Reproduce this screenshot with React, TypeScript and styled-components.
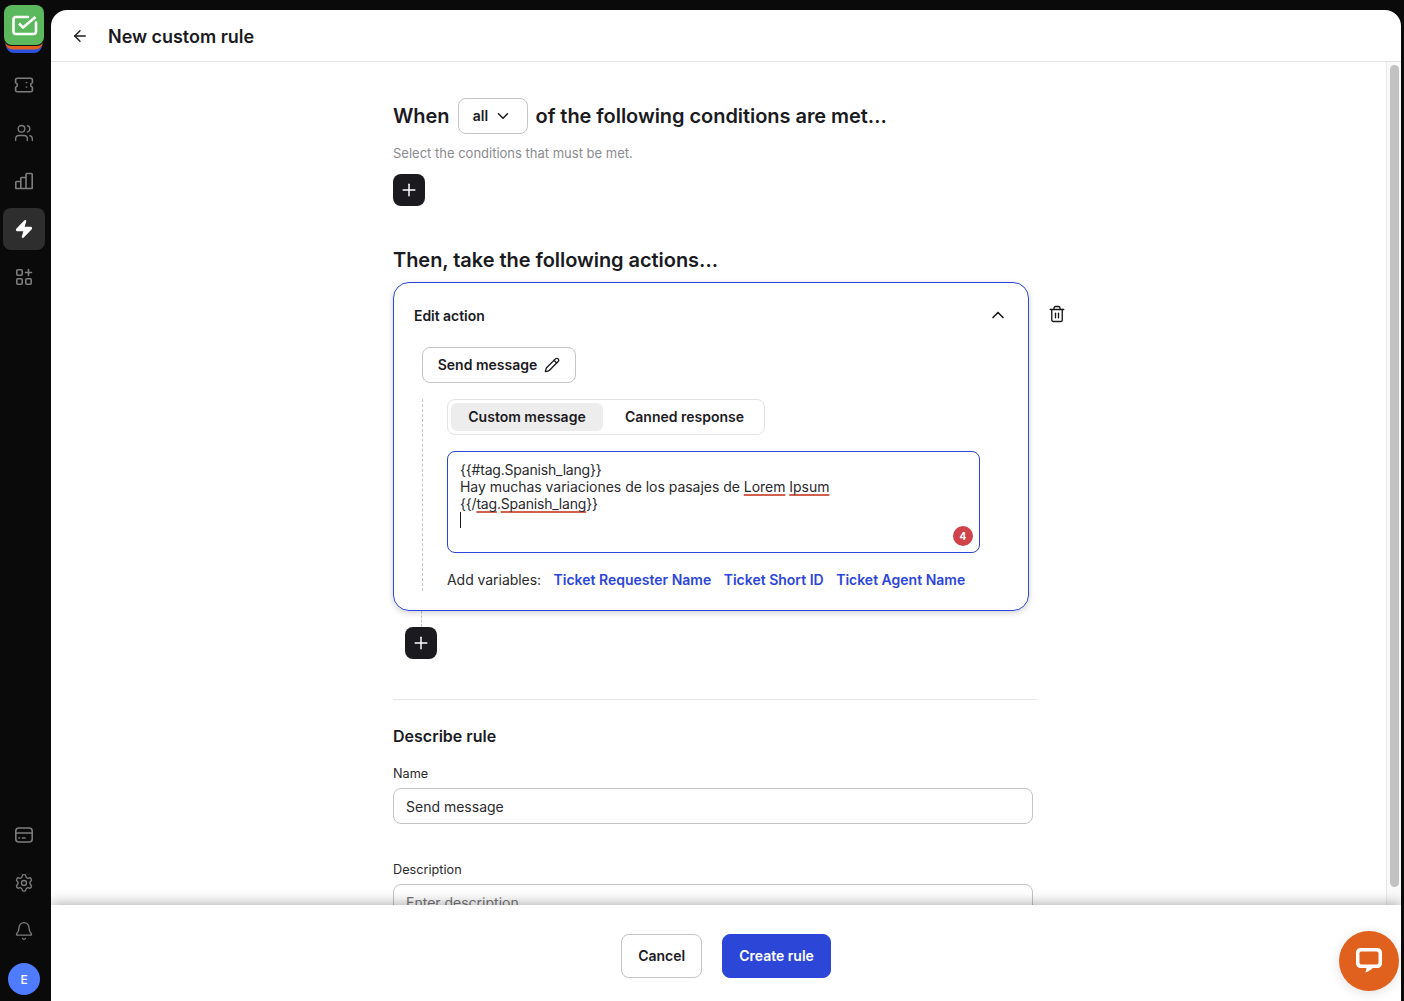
import { ReactNode } from 'react'
import styled, { createGlobalStyle } from 'styled-components'
import {
  ArrowLeft,
  Bell,
  ChevronDown,
  ChevronUp,
  Pencil,
  Plus,
  Settings,
  Trash2,
  Users,
  Zap
} from 'lucide-react'

const GlobalStyle = createGlobalStyle`
  html, body {
    margin: 0;
    height: 100%;
    overflow: hidden;
    background: #0a0a0a;
  }
  body, input, button {
    font-family: Inter, "Liberation Sans", sans-serif;
  }
  * {
    box-sizing: border-box;
  }
`

function TicketIcon() {
  return (
    <svg width="20" height="20" viewBox="0 0 20 20" fill="none" stroke="currentColor" strokeWidth="1.6" strokeLinejoin="round">
      <path d="M3.2 3.2h13.6a1.6 1.6 0 0 1 1.6 1.6v2.900a2.400 2.400 0 0 0 0 4.600v2.900a1.600 1.600 0 0 1-1.600 1.600H3.200a1.600 1.600 0 0 1-1.600-1.600v-2.900a2.400 2.400 0 0 0 0-4.600V4.800a1.600 1.600 0 0 1 1.600-1.600z" />
      <path d="M12.500 7v1.200M12.500 11.500v1.200" />
    </svg>
  )
}

function BarsIcon() {
  return (
    <svg width="20" height="20" viewBox="0 0 20 20" fill="none" stroke="currentColor" strokeWidth="1.6" strokeLinejoin="round">
      <path d="M1.800 17.500v-6.200a.8.8 0 0 1 .8-.8h4.200v7zM6.800 17.500V7.300a.8.8 0 0 1 .8-.8h4.400v11zM12 17.500V3.300a.8.8 0 0 1 .8-.8h4.600a.8.8 0 0 1 .8.8v14.200z" />
    </svg>
  )
}

function AppsIcon() {
  return (
    <svg width="20" height="20" viewBox="0 0 20 20" fill="none" stroke="currentColor" strokeWidth="1.6" strokeLinecap="round">
      <rect x="2.800" y="2.800" width="5.400" height="5.400" rx="1" />
      <rect x="2.800" y="11.800" width="5.400" height="5.400" rx="1" />
      <rect x="11.800" y="11.800" width="5.400" height="5.400" rx="1" />
      <path d="M14.500 2.500v6M11.500 5.500h6" />
    </svg>
  )
}

function CardIcon() {
  return (
    <svg width="20" height="20" viewBox="0 0 20 20" fill="none" stroke="currentColor" strokeWidth="1.6" strokeLinecap="round">
      <rect x="1.800" y="3" width="16.400" height="14" rx="3" />
      <path d="M1.800 8h16.400M5 13h.6M8.500 13h2.500" />
    </svg>
  )
}

function Logo() {
  return (
    <svg width="40" height="48" viewBox="0 0 40 48" aria-hidden>
      <path d="M2 36h36v4a8 8 0 0 1-8 8H10a8 8 0 0 1-8-8z" fill="#2b50e0" />
      <path d="M1 33h38v3.500a8 8 0 0 1-8 8H9a8 8 0 0 1-8-8z" fill="#e2601f" />
      <path d="M0 34h40v1a8 8 0 0 1-8 6H8a8 8 0 0 1-8-6z" fill="#141414" />
      <rect width="40" height="40" rx="8" fill="#5cb85c" />
      <path
        d="M24 12H12a2.500 2.500 0 0 0-2.500 2.500v12a2.500 2.500 0 0 0 2.500 2.500h17.500a2.500 2.500 0 0 0 2.500-2.500v-9"
        fill="none"
        stroke="#fff"
        strokeWidth="2.600"
        strokeLinecap="round"
      />
      <path d="M15 18.500l4 4L31.500 12" fill="none" stroke="#fff" strokeWidth="2.600" strokeLinejoin="round" />
    </svg>
  )
}

function ChatBubble() {
  return (
    <svg width="30" height="30" viewBox="0 0 30 30" aria-hidden>
      <path
        d="M6.500 2h17A4.500 4.500 0 0 1 28 6.500v11a4.500 4.500 0 0 1-4.500 4.500h-4.700c-2.200 2.400-4.600 3.700-7.600 4.500.8-1.400 1.200-2.800 1.300-4.500H6.500A4.500 4.500 0 0 1 2 17.500v-11A4.500 4.500 0 0 1 6.500 2z"
        fill="#fff"
      />
      <rect x="5.500" y="5.500" width="19" height="13" rx="1.800" fill="#e0611d" />
    </svg>
  )
}

const Shell = styled.div`
  display: flex;
  width: 1404px;
  height: 1001px;
  background: #0a0a0a;
  overflow: hidden;
`

const Sidebar = styled.nav`
  width: 51px;
  flex: none;
  display: flex;
  flex-direction: column;
  align-items: center;
  padding: 5px 6px 1px 3px;
`

const LogoSlot = styled.div`
  height: 48px;
  margin-bottom: 11px;
  display: flex;
`

const NavGroup = styled.div`
  display: flex;
  flex-direction: column;
  gap: 6px;
`

const NavItem = styled.div<{ $active?: boolean }>`
  width: 42px;
  height: 42px;
  border-radius: 8px;
  display: flex;
  align-items: center;
  justify-content: center;
  color: ${p => (p.$active ? '#fff' : '#7d7d7d')};
  background: ${p => (p.$active ? '#2e2e2e' : 'transparent')};
`

const Spacer = styled.div`
  flex: 1;
`

const Avatar = styled.div`
  width: 32px;
  height: 32px;
  border-radius: 50%;
  background: #4f7cff;
  color: #fff;
  font-size: 12px;
  font-weight: 500;
  display: flex;
  align-items: center;
  justify-content: center;
`

const Main = styled.main`
  position: relative;
  width: 1350px;
  flex: none;
  margin-top: 10px;
  background: #fff;
  border-radius: 16px 16px 0 0;
  display: flex;
  flex-direction: column;
  overflow: hidden;
`

const Header = styled.header`
  height: 52px;
  flex: none;
  display: flex;
  align-items: center;
  gap: 19px;
  padding: 1px 0 0 20px;
  border-bottom: 1px solid #e2e2e2;
  color: #1b1b1f;
`

const BackIcon = styled(ArrowLeft)`
  flex: none;
`

const Title = styled.h1`
  margin: 0;
  font-size: 18px;
  font-weight: 600;
  letter-spacing: -0.03px;
`

const Body = styled.div`
  flex: 1;
  min-height: 0;
  display: flex;
`

const Viewport = styled.div`
  flex: 1;
  min-width: 0;
  overflow: hidden;
`

const ScrollTrack = styled.div`
  width: 15px;
  flex: none;
  background: #fafafa;
  border-left: 1px solid #e8e8e8;
  padding: 3px 2px 0 3px;
`

const ScrollThumb = styled.div`
  height: 822px;
  background: #c2c2c2;
  border-radius: 5px;
`

const Content = styled.div`
  width: 644px;
  margin-left: 342px;
  padding-top: 36px;
  color: #1b1b1f;
`

const WhenRow = styled.div`
  display: flex;
  align-items: center;
  gap: 8px;
  height: 36px;
`

const Heading = styled.h2`
  margin: 0;
  font-size: 20px;
  line-height: 24px;
  font-weight: 600;
  letter-spacing: -0.05px;
`

const AllSelect = styled.div`
  width: 70px;
  height: 36px;
  padding-bottom: 1px;
  border: 1px solid #c4c4c4;
  border-radius: 8px;
  display: flex;
  align-items: center;
  justify-content: center;
  gap: 6px;
  font-size: 14px;
  font-weight: 600;
`

const Hint = styled.p`
  margin: 11px 0 0;
  font-size: 13px;
  line-height: 16px;
  color: #8b8b90;
`

const AddButton = styled.button<{ $left?: number }>`
  width: 32px;
  height: 32px;
  padding: 0;
  border: none;
  border-radius: 8px;
  background: #1b1b1f;
  color: #fff;
  display: flex;
  align-items: center;
  justify-content: center;
  margin-left: ${p => p.$left ?? 0}px;
`

const ConditionAdd = styled(AddButton)`
  margin-top: 13px;
`

const ThenHeading = styled(Heading)`
  margin-top: 42px;
`

const CardRow = styled.div`
  display: flex;
  align-items: flex-start;
  gap: 19px;
  margin-top: 10px;
`

const ActionCard = styled.section`
  width: 636px;
  flex: none;
  height: 329px;
  border: 1.5px solid #2c46d8;
  border-radius: 16px;
  box-shadow: 0 2px 6px rgba(0, 0, 0, 0.18);
  padding: 0 20px;
`

const CardHead = styled.div`
  display: flex;
  align-items: center;
  justify-content: space-between;
  height: 64px;
`

const CardTitle = styled.span`
  font-size: 14px;
  font-weight: 600;
  letter-spacing: -0.05px;
`

const ActionPill = styled.div`
  width: 154px;
  height: 36px;
  margin-left: 8px;
  padding-bottom: 1px;
  border: 1px solid #c4c4c4;
  border-radius: 8px;
  display: flex;
  align-items: center;
  justify-content: center;
  gap: 7px;
  font-size: 14px;
  font-weight: 600;
`

const Branch = styled.div`
  margin: 16px 0 0 8px;
  padding-left: 24px;
  height: 192px;
  border-left: 1px dashed #c4c4c4;
`

const Tabs = styled.div`
  width: 318px;
  height: 36px;
  border: 1px solid #e2e2e2;
  border-radius: 8px;
  padding: 3px;
  display: flex;
  gap: 5px;
`

const Tab = styled.div<{ $active?: boolean }>`
  height: 28px;
  width: ${p => (p.$active ? '152px' : '153px')};
  padding-bottom: 1px;
  border-radius: 6px;
  display: flex;
  align-items: center;
  justify-content: center;
  font-size: 14px;
  font-weight: 600;
  background: ${p => (p.$active ? '#ededed' : 'transparent')};
`

const Editor = styled.div`
  position: relative;
  width: 533px;
  height: 102px;
  margin-top: 16px;
  padding: 9px 12px;
  border: 1px solid #2c46d8;
  border-radius: 8px;
  font-size: 14px;
  line-height: 17px;
  color: #2a2a2e;
`

const EditorLine = styled.div<{ $tight?: boolean }>`
  height: 17px;
  white-space: nowrap;
  letter-spacing: ${p => (p.$tight ? '-0.2px' : '-0.03px')};
`

const Misspelled = styled.span`
  text-decoration: underline solid #d2604f 2px;
  text-underline-offset: 2px;
  text-decoration-skip-ink: none;
`

const Caret = styled.div`
  width: 1px;
  height: 16px;
  background: #1b1b1f;
`

const CountBadge = styled.span`
  position: absolute;
  right: 6px;
  bottom: 6px;
  width: 20px;
  height: 20px;
  border-radius: 50%;
  background: #d0434b;
  color: #fff;
  font-size: 10px;
  font-weight: 700;
  display: flex;
  align-items: center;
  justify-content: center;
`

const Variables = styled.div`
  display: flex;
  align-items: center;
  gap: 12.5px;
  margin-top: 17px;
  height: 18px;
  font-size: 14px;
  white-space: nowrap;
`

const VariablesLabel = styled.span`
  color: #2a2a2e;
  letter-spacing: -0.05px;
`

const VariableLink = styled.a`
  color: #2c46d8;
  font-weight: 600;
`

const DeleteButton = styled.div`
  padding-top: 23px;
  color: #1b1b1f;
  display: flex;
`

const Connector = styled.div`
  width: 1px;
  height: 16px;
  margin-left: 28px;
  border-left: 1px dashed #c4c4c4;
`

const Divider = styled.hr`
  margin: 40px 0 0;
  border: none;
  border-top: 1px solid #e6e6e6;
`

const SubHeading = styled.h3`
  margin: 26px 0 0;
  font-size: 16px;
  line-height: 20px;
  font-weight: 600;
`

const Field = styled.div<{ $gap: number }>`
  margin-top: ${p => p.$gap}px;
`

const Label = styled.label`
  display: block;
  font-size: 12.7px;
  line-height: 16px;
  color: #2a2a2e;
  margin-bottom: 6px;
`

const TextInput = styled.input`
  display: block;
  width: 640px;
  height: 36px;
  padding: 0 12px;
  border: 1px solid #c4c4c4;
  border-radius: 8px;
  font-size: 14px;
  color: #2a2a2e;
  background: #fff;
  outline: none;

  &::placeholder {
    color: #76767a;
  }
`

const Footer = styled.footer`
  position: relative;
  height: 96px;
  flex: none;
  background: #fff;
  box-shadow: 0 -2px 12px rgba(0, 0, 0, 0.3);
  display: flex;
  align-items: center;
  justify-content: center;
  gap: 20px;
  padding-top: 5px;
`

const FooterButton = styled.button<{ $primary?: boolean }>`
  height: 44px;
  padding: 0 16px;
  border-radius: 8px;
  border: 1px solid ${p => (p.$primary ? '#2c46d8' : '#c4c4c4')};
  background: ${p => (p.$primary ? '#2c46d8' : '#fff')};
  color: ${p => (p.$primary ? '#fff' : '#1b1b1f')};
  font-size: 14px;
  font-weight: 600;
`

const ChatLauncher = styled.div`
  position: absolute;
  right: 2px;
  bottom: 10px;
  width: 60px;
  height: 60px;
  border-radius: 50%;
  background: #e0611d;
  box-shadow: 0 2px 12px rgba(0, 0, 0, 0.12);
  display: flex;
  align-items: center;
  justify-content: center;
`

const topNav: { icon: ReactNode; active?: boolean }[] = [
  { icon: <TicketIcon /> },
  { icon: <Users size={20} strokeWidth={1.6} /> },
  { icon: <BarsIcon /> },
  { icon: <Zap size={20} fill="currentColor" strokeWidth={1.5} />, active: true },
  { icon: <AppsIcon /> }
]

const bottomNav: ReactNode[] = [
  <CardIcon />,
  <Settings size={20} strokeWidth={1.6} />,
  <Bell size={20} strokeWidth={1.6} />
]

const variables = ['Ticket Requester Name', 'Ticket Short ID', 'Ticket Agent Name']

function App() {
  return (
    <Shell>
      <GlobalStyle />
      <Sidebar>
        <LogoSlot>
          <Logo />
        </LogoSlot>
        <NavGroup>
          {topNav.map((item, i) => (
            <NavItem key={i} $active={item.active}>
              {item.icon}
            </NavItem>
          ))}
        </NavGroup>
        <Spacer />
        <NavGroup>
          {bottomNav.map((icon, i) => (
            <NavItem key={i}>{icon}</NavItem>
          ))}
          <NavItem>
            <Avatar>E</Avatar>
          </NavItem>
        </NavGroup>
      </Sidebar>

      <Main>
        <Header>
          <BackIcon size={18} strokeWidth={1.8} />
          <Title>New custom rule</Title>
        </Header>

        <Body>
          <Viewport>
            <Content>
              <WhenRow>
                <Heading>When</Heading>
                <AllSelect>
                  all <ChevronDown size={18} strokeWidth={2} />
                </AllSelect>
                <Heading>of the following conditions are met…</Heading>
              </WhenRow>
              <Hint>Select the conditions that must be met.</Hint>
              <ConditionAdd>
                <Plus size={20} strokeWidth={1.8} />
              </ConditionAdd>

              <ThenHeading>Then, take the following actions…</ThenHeading>
              <CardRow>
                <ActionCard>
                  <CardHead>
                    <CardTitle>Edit action</CardTitle>
                    <ChevronUp size={20} strokeWidth={2} />
                  </CardHead>
                  <ActionPill>
                    Send message <Pencil size={16} strokeWidth={2} />
                  </ActionPill>
                  <Branch>
                    <Tabs>
                      <Tab $active>Custom message</Tab>
                      <Tab>Canned response</Tab>
                    </Tabs>
                    <Editor>
                      <EditorLine $tight>{'{{#tag.Spanish_lang}}'}</EditorLine>
                      <EditorLine>
                        Hay muchas variaciones de los pasajes de <Misspelled>Lorem</Misspelled>{' '}
                        <Misspelled>Ipsum</Misspelled>
                      </EditorLine>
                      <EditorLine $tight>
                        {'{{/'}
                        <Misspelled>tag</Misspelled>.<Misspelled>Spanish_lang</Misspelled>
                        {'}}'}
                      </EditorLine>
                      <Caret />
                      <CountBadge>4</CountBadge>
                    </Editor>
                    <Variables>
                      <VariablesLabel>Add variables:</VariablesLabel>
                      {variables.map(name => (
                        <VariableLink key={name}>{name}</VariableLink>
                      ))}
                    </Variables>
                  </Branch>
                </ActionCard>
                <DeleteButton>
                  <Trash2 size={18} strokeWidth={1.8} />
                </DeleteButton>
              </CardRow>
              <Connector />
              <AddButton $left={12}>
                <Plus size={20} strokeWidth={1.8} />
              </AddButton>

              <Divider />
              <SubHeading>Describe rule</SubHeading>
              <Field $gap={20}>
                <Label>Name</Label>
                <TextInput readOnly value="Send message" />
              </Field>
              <Field $gap={38}>
                <Label>Description</Label>
                <TextInput readOnly placeholder="Enter description" />
              </Field>
            </Content>
          </Viewport>
          <ScrollTrack>
            <ScrollThumb />
          </ScrollTrack>
        </Body>

        <Footer>
          <FooterButton>Cancel</FooterButton>
          <FooterButton $primary>Create rule</FooterButton>
          <ChatLauncher>
            <ChatBubble />
          </ChatLauncher>
        </Footer>
      </Main>
    </Shell>
  )
}

export default App
